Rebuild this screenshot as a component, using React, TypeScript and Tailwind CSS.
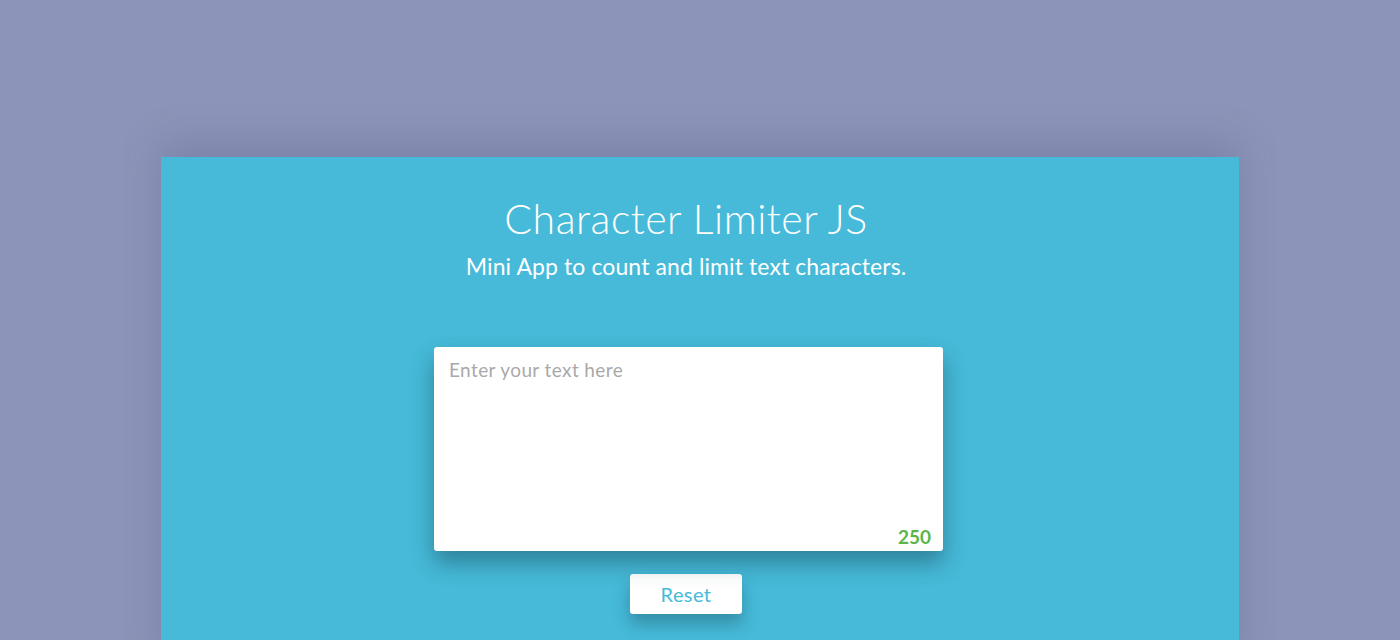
import { useState } from 'react';

const LIMIT = 250;

export default function App() {
  const [text, setText] = useState('');
  const left = LIMIT - text.length;

  return (
    <main className="w-full h-[640px] overflow-hidden bg-[#8c94b9] pt-[157px] font-['Lato',sans-serif]">
      <div className="w-[1078px] h-[520px] mx-auto bg-[#46bad8] shadow-[0_-14px_36px_rgba(90,90,130,0.3)] flex flex-col items-center pt-[38px] pr-[28px]">
        <h1 className="text-[41px] leading-[48px] font-light text-white tracking-[0.5px]">
          Character Limiter JS
        </h1>
        <p className="mt-[8px] text-[23px] leading-[30px] text-white tracking-[0.1px]">
          Mini App to count and limit text characters.
        </p>

        {/* Text box */}
        <div className="relative mt-[66px] ml-[5px] w-[509px] h-[204px] bg-white rounded-[3px] shadow-[0_12px_22px_rgba(20,60,80,0.45)]">
          <textarea
            value={text}
            maxLength={LIMIT}
            onChange={(e) => setText(e.target.value)}
            placeholder="Enter your text here"
            className="w-full h-full resize-none bg-transparent px-[15px] py-[10px] text-[19px] leading-[26px] tracking-[0.4px] text-[#555] placeholder:text-[#a9a9a9] outline-none"
          />
          <span className="absolute right-[12px] bottom-0 text-[19px] font-bold text-[#5cb54a]">
            {left}
          </span>
        </div>

        <button
          onClick={() => setText('')}
          className="mt-[23px] w-[112px] h-[40px] bg-white rounded-[3px] text-[20px] tracking-[0.4px] text-[#46bad8] shadow-[0_10px_16px_rgba(20,60,80,0.35)]"
        >
          Reset
        </button>
      </div>
    </main>
  );
}
